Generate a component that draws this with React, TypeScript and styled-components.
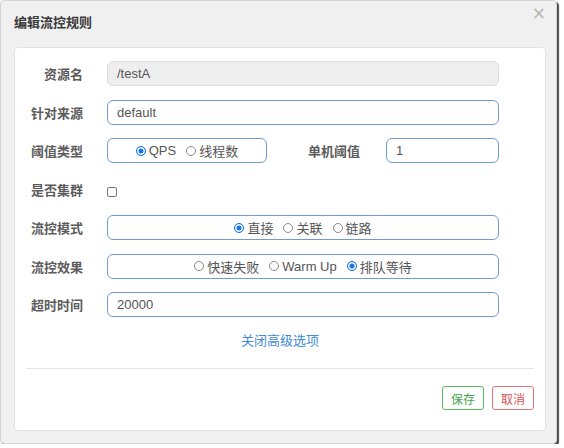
import * as React from 'react';
import styled, { createGlobalStyle } from 'styled-components';

const GlobalStyle = createGlobalStyle`
  body {
    margin: 0;
    background: #ffffff;
    font-family: "Liberation Sans", "Noto Sans CJK SC", sans-serif;
  }
`;

type RadioOption = { label: string; checked?: boolean };

function RadioGroup({ options }: { options: RadioOption[] }) {
  return (
    <>
      {options.map((o) => (
        <RadioItem key={o.label}>
          <RadioDot $checked={!!o.checked} />
          <span>{o.label}</span>
        </RadioItem>
      ))}
    </>
  );
}

export default function App() {
  return (
    <>
      <GlobalStyle />
      <Dialog>
        <Header>
          <Title>编辑流控规则</Title>
          <CloseBtn>×</CloseBtn>
        </Header>
        <Card>
          <Form>
            <Row>
              <Label>资源名</Label>
              <TextInput $disabled value="/testA" readOnly />
            </Row>
            <Row>
              <Label>针对来源</Label>
              <TextInput value="default" readOnly />
            </Row>
            <Row>
              <Label>阈值类型</Label>
              <RadioBox $width={160}>
                <RadioGroup options={[{ label: 'QPS', checked: true }, { label: '线程数' }]} />
              </RadioBox>
              <SideLabel>单机阈值</SideLabel>
              <TextInput $width={113} value="1" readOnly />
            </Row>
            <Row>
              <Label>是否集群</Label>
              <CheckBox />
            </Row>
            <Row>
              <Label>流控模式</Label>
              <RadioBox>
                <RadioGroup
                  options={[{ label: '直接', checked: true }, { label: '关联' }, { label: '链路' }]}
                />
              </RadioBox>
            </Row>
            <Row>
              <Label>流控效果</Label>
              <RadioBox>
                <RadioGroup
                  options={[{ label: '快速失败' }, { label: 'Warm Up' }, { label: '排队等待', checked: true }]}
                />
              </RadioBox>
            </Row>
            <Row>
              <Label>超时时间</Label>
              <TextInput value="20000" readOnly />
            </Row>
          </Form>
          <LinkRow>
            <ToggleLink>关闭高级选项</ToggleLink>
          </LinkRow>
          <Divider />
          <Footer>
            <ActionBtn $tone="green">保存</ActionBtn>
            <ActionBtn $tone="red">取消</ActionBtn>
          </Footer>
        </Card>
      </Dialog>
    </>
  );
}

const Dialog = styled.div`
  width: 557px;
  height: 444px;
  box-sizing: border-box;
  background: #f0f0f0;
  border: 1px solid #d2d2d2;
  border-radius: 4px;
  box-shadow: 2px 2px 1px #4a4a4a;
  display: flex;
  flex-direction: column;
`;

const Header = styled.div`
  height: 46px;
  display: flex;
  justify-content: space-between;
  align-items: flex-start;
  padding: 0 10px 0 13px;
  box-sizing: border-box;
`;

const Title = styled.div`
  margin-top: 14px;
  font-size: 13px;
  font-weight: 700;
  color: #3a3a3a;
  line-height: 16px;
`;

const CloseBtn = styled.div`
  margin-top: 3px;
  font-size: 17px;
  line-height: 18px;
  color: #b4b4b4;
  font-family: "DejaVu Sans", sans-serif;
`;

const Card = styled.div`
  width: 532px;
  margin-left: 13px;
  box-sizing: border-box;
  background: #ffffff;
  border: 1px solid #e2e2e2;
  border-radius: 4px;
  padding: 13px 0 20px;
`;

const Form = styled.div`
  display: flex;
  flex-direction: column;
  gap: 13.5px;
`;

const Row = styled.div`
  display: flex;
  align-items: center;
  height: 25px;
`;

const Label = styled.div`
  width: 68px;
  margin-right: 24px;
  text-align: right;
  font-size: 13px;
  font-weight: 700;
  color: #5c5c5c;
  font-family: "Noto Sans CJK SC", sans-serif;
`;

const SideLabel = styled(Label)`
  width: 93px;
  margin-right: 26px;
`;

const TextInput = styled.input<{ $disabled?: boolean; $width?: number }>`
  width: ${(p) => p.$width ?? 392}px;
  height: 25px;
  box-sizing: border-box;
  border: 1px solid ${(p) => (p.$disabled ? '#dcdcdc' : '#6f9bd0')};
  background: ${(p) => (p.$disabled ? '#eeeeee' : '#ffffff')};
  border-radius: 6px;
  padding: 0 9px;
  font-size: 13px;
  color: #555555;
  font-family: "Liberation Sans", "Noto Sans CJK SC", sans-serif;
  outline: none;
`;

const RadioBox = styled.div<{ $width?: number }>`
  width: ${(p) => p.$width ?? 392}px;
  height: 25px;
  box-sizing: border-box;
  border: 1px solid #6f9bd0;
  border-radius: 6px;
  display: flex;
  align-items: center;
  justify-content: center;
  gap: 10px;
  font-size: 13px;
  color: #555555;
`;

const RadioItem = styled.label`
  display: flex;
  align-items: center;
  gap: 3px;
  font-family: "Liberation Sans", "Noto Sans CJK SC", sans-serif;
`;

const RadioDot = styled.span<{ $checked: boolean }>`
  width: 10px;
  height: 10px;
  box-sizing: border-box;
  border-radius: 50%;
  border: 1px solid ${(p) => (p.$checked ? '#1a73e8' : '#8a8a8a')};
  background: ${(p) => (p.$checked ? '#1a73e8' : '#ffffff')};
  box-shadow: ${(p) => (p.$checked ? 'inset 0 0 0 1.5px #ffffff' : 'none')};
`;

const CheckBox = styled.span`
  width: 10px;
  height: 10px;
  margin-top: 5px;
  box-sizing: border-box;
  border: 1px solid #777777;
  border-radius: 2px;
  background: #ffffff;
`;

const LinkRow = styled.div`
  display: flex;
  justify-content: center;
  margin-top: 13px;
  height: 18px;
  align-items: center;
`;

const ToggleLink = styled.a`
  font-size: 13px;
  color: #3f8bd6;
  font-family: "Noto Sans CJK SC", sans-serif;
  cursor: pointer;
`;

const Divider = styled.div`
  height: 1px;
  background: #e5e5e5;
  margin: 20px 11px 0;
`;

const Footer = styled.div`
  display: flex;
  justify-content: flex-end;
  gap: 8px;
  padding: 17px 11px 0;
`;

const ActionBtn = styled.button<{ $tone: 'green' | 'red' }>`
  height: 24px;
  padding: 0 8px;
  background: #ffffff;
  border: 1px solid ${(p) => (p.$tone === 'green' ? '#5cb85c' : '#e5737b')};
  color: ${(p) => (p.$tone === 'green' ? '#3fa84a' : '#d9534f')};
  border-radius: 3px;
  font-size: 12px;
  font-family: "Noto Sans CJK SC", sans-serif;
  cursor: pointer;
`;
